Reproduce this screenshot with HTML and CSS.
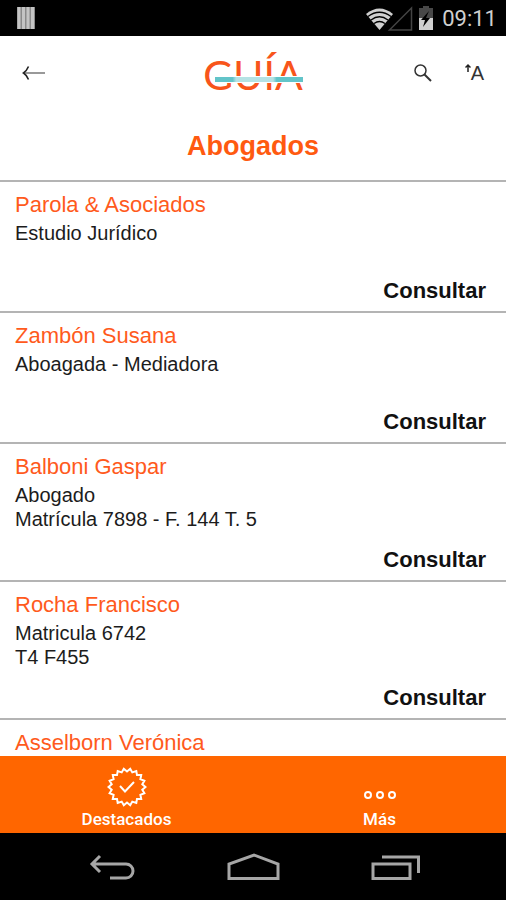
FILE: index.html
```html
<!DOCTYPE html>
<html lang="es">
<head>
  <meta charset="UTF-8" />
  <meta name="viewport" content="width=device-width, initial-scale=1.0"/>
  <title>Guía - Abogados</title>
  <link rel="stylesheet" href="styles.css">
</head>
<body>
  <div class="status-bar">
    <svg class="status-left" width="20" height="24" viewBox="0 0 20 24">
      <rect x="1" y="1" width="18" height="22" fill="#8a8a8a"/>
      <path d="M3 1v22M7.500 1v22M12 1v22M16.500 1v22" stroke="#c4c4c4" stroke-width="3"/>
    </svg>
    <svg width="76" height="26" viewBox="0 0 76 26">
      <!-- wifi -->
      <path d="M0 9Q13.500-2 27 9L13.500 25Z" fill="#cfcfcf"/>
      <path d="M2 11.500Q13.500 3 25 11.500M5 15Q13.500 8.500 22 15M8 18.500Q13.500 14.500 19 18.500" fill="none" stroke="#000" stroke-width="1.300"/>
      <!-- signal -->
      <path d="M23.500 25L45.500 3v22Z" fill="none" stroke="#444" stroke-width="1.500"/>
      <!-- battery -->
      <path d="M57 3V1h6v2h4v22H53V3Z" fill="#484848"/>
      <path d="M53 13h14v12H53Z" fill="#cfcfcf"/>
      <path d="M63 6l-8 9h4l-2 7 7-9h-4Z" fill="#000"/>
    </svg>
    <span class="clock">09:11</span>
  </div>

  <header class="header">
    <button class="icon-btn" aria-label="Volver">
      <svg width="24" height="18" viewBox="0 0 24 18" fill="none">
        <path d="M2 9h21" stroke="#999" stroke-width="2"/>
        <path d="M6.500 2.500C5 6 4 7.500 1.500 9C4 10.500 5 12 6.500 15.500" stroke="#222" stroke-width="1.600"/>
      </svg>
    </button>
    <div class="logo">GUÍA</div>
    <div class="header-actions">
      <button class="icon-btn" aria-label="Buscar">
        <svg width="20" height="20" viewBox="0 0 20 20" fill="none" stroke="#333">
          <circle cx="7.500" cy="7.500" r="5.500" stroke-width="1.500"/>
          <path d="M11.500 11.500L18 18" stroke-width="2"/>
        </svg>
      </button>
      <button class="icon-btn text-size" aria-label="Tamaño de letra">
        <svg width="6" height="10" viewBox="0 0 6 10" fill="none" stroke="#222">
          <path d="M3 9V2M.500 4.500L3 2l2.500 2.500" stroke-width="1.500"/>
        </svg>
        <span>A</span>
      </button>
    </div>
  </header>

  <h1 class="title">Abogados</h1>

  <main class="list">
    <section class="item">
      <h2>Parola &amp; Asociados</h2>
      <p>Estudio Jurídico</p>
      <a href="#">Consultar</a>
    </section>
    <section class="item">
      <h2>Zambón Susana</h2>
      <p>Aboagada - Mediadora</p>
      <a href="#">Consultar</a>
    </section>
    <section class="item">
      <h2>Balboni Gaspar</h2>
      <p>Abogado<br>Matrícula 7898 - F. 144 T. 5</p>
      <a href="#">Consultar</a>
    </section>
    <section class="item">
      <h2>Rocha Francisco</h2>
      <p>Matricula 6742<br>T4 F455</p>
      <a href="#">Consultar</a>
    </section>
    <section class="item">
      <h2>Asselborn Verónica</h2>
    </section>
  </main>

  <nav class="tabs">
    <button class="tab">
      <svg width="40" height="40" viewBox="-20 -20 40 40" fill="none" stroke="#fff" stroke-width="2">
        <path d="M18.500 0L15.300 2.700L17.400 6.300L13.400 7.800L14.200 11.900L10 11.900L9.300 16L5.300 14.600L3.200 18.200L0 15.500L-3.200 18.200L-5.300 14.600L-9.300 16L-10 11.900L-14.200 11.900L-13.400 7.800L-17.400 6.300L-15.300 2.700L-18.500 0L-15.300-2.700L-17.400-6.300L-13.400-7.800L-14.200-11.900L-10-11.900L-9.300-16L-5.300-14.600L-3.200-18.200L0-15.500L3.200-18.200L5.300-14.600L9.300-16L10-11.900L14.200-11.900L13.400-7.800L17.400-6.300L15.300-2.700Z"/>
        <path d="M-7-1L-2 4.500L7-5"/>
      </svg>
      <span>Destacados</span>
    </button>
    <button class="tab">
      <svg width="34" height="24" viewBox="0 0 34 24" fill="none" stroke="#fff" stroke-width="2">
        <circle cx="5" cy="12" r="3"/>
        <circle cx="17" cy="12" r="3"/>
        <circle cx="29" cy="12" r="3"/>
      </svg>
      <span>Más</span>
    </button>
  </nav>

  <div class="nav-bar">
    <button aria-label="Atrás">
      <svg width="52" height="30" viewBox="0 0 52 30">
        <path d="M15 4L7 12l8 8M7 12h34a7 7 0 0 1 0 14H25"/>
      </svg>
    </button>
    <button aria-label="Inicio">
      <svg width="54" height="30" viewBox="0 0 54 30">
        <path d="M3 26.500V12L28 3L52 12v14.500Z"/>
      </svg>
    </button>
    <button aria-label="Recientes">
      <svg width="52" height="30" viewBox="0 0 52 30">
        <path d="M4 12h37v14.500H4ZM13 5h36.500v16"/>
      </svg>
    </button>
  </div>
</body>
</html>
```
FILE: styles.css
```css
* {
  box-sizing: border-box;
}

body {
  margin: 0;
  height: 100vh;
  display: flex;
  flex-direction: column;
  background: #fff;
  color: #1c1c1c;
  font-family: "Liberation Sans", Arial, sans-serif;
  overflow: hidden;
}

button {
  border: none;
  padding: 0;
  background: none;
  font: inherit;
  color: inherit;
  cursor: pointer;
}

svg {
  display: block;
}

h1, h2, p {
  margin: 0;
}

.status-bar {
  display: flex;
  align-items: center;
  height: 36px;
  flex: none;
  padding: 0 9px 0 16px;
  background: #000;
  color: #cfcfcf;
}

.status-left {
  margin-right: auto;
}

.clock {
  font-family: Roboto, sans-serif;
  font-size: 22px;
}

.header {
  display: grid;
  grid-template-columns: 1fr auto 1fr;
  align-items: center;
  height: 74px;
  flex: none;
  padding: 0 22px;
}

.icon-btn {
  justify-self: start;
}

.logo {
  position: relative;
  padding-top: 4px;
  font-family: Lato, sans-serif;
  font-size: 41px;
  line-height: 70px;
  color: #f8551b;
}

/* turquoise line that crosses the letters, paler in the middle */
.logo::after {
  content: "";
  position: absolute;
  left: 12px;
  right: 0;
  top: 40px;
  height: 5px;
  background: linear-gradient(90deg, #62c4c9 20%, #b5e2e4 24%, #b5e2e4 66%, #62c4c9 70%);
  border: solid #fff;
  border-width: 1px 0;
  background-clip: padding-box;
}

.header-actions {
  display: flex;
  justify-content: flex-end;
  align-items: center;
  gap: 32px;
}

.text-size {
  display: flex;
  align-items: flex-start;
  color: #333;
  font-size: 20px;
  line-height: 20px;
}

.title {
  flex: none;
  padding-top: 2px;
  font-size: 27px;
  line-height: 68px;
  text-align: center;
  color: #ff5a10;
}

.list {
  flex: 1;
  min-height: 0;
  overflow-y: auto;
  scrollbar-width: none;
}

.item {
  display: flex;
  flex-direction: column;
  padding: 7px 20px 4px 15px;
  border-top: 2px solid #b4b4b4;
}

.item h2 {
  font-size: 22px;
  font-weight: normal;
  line-height: 32px;
  color: #ff5a1c;
}

.item p {
  min-height: 41px;
  font-size: 20px;
  line-height: 24px;
}

.item a {
  align-self: flex-end;
  margin-top: 13px;
  font-size: 22px;
  font-weight: bold;
  line-height: 32px;
  color: #111;
  text-decoration: none;
}

.tabs {
  display: flex;
  flex: none;
  height: 77px;
  background: #ff6600;
}

.tab {
  flex: 1;
  display: flex;
  flex-direction: column;
  align-items: center;
  justify-content: flex-end;
  padding-bottom: 2px;
  color: #fff;
  font-family: Roboto, sans-serif;
  font-size: 17px;
  font-weight: 500;
  line-height: 24px;
}

.nav-bar {
  display: flex;
  flex: none;
  height: 67px;
  padding: 0 8%;
  background: #000;
}

.nav-bar button {
  flex: 1;
  display: flex;
  align-items: center;
  justify-content: center;
}

.nav-bar svg {
  fill: none;
  stroke: #a6a6a6;
  stroke-width: 3;
}
```
